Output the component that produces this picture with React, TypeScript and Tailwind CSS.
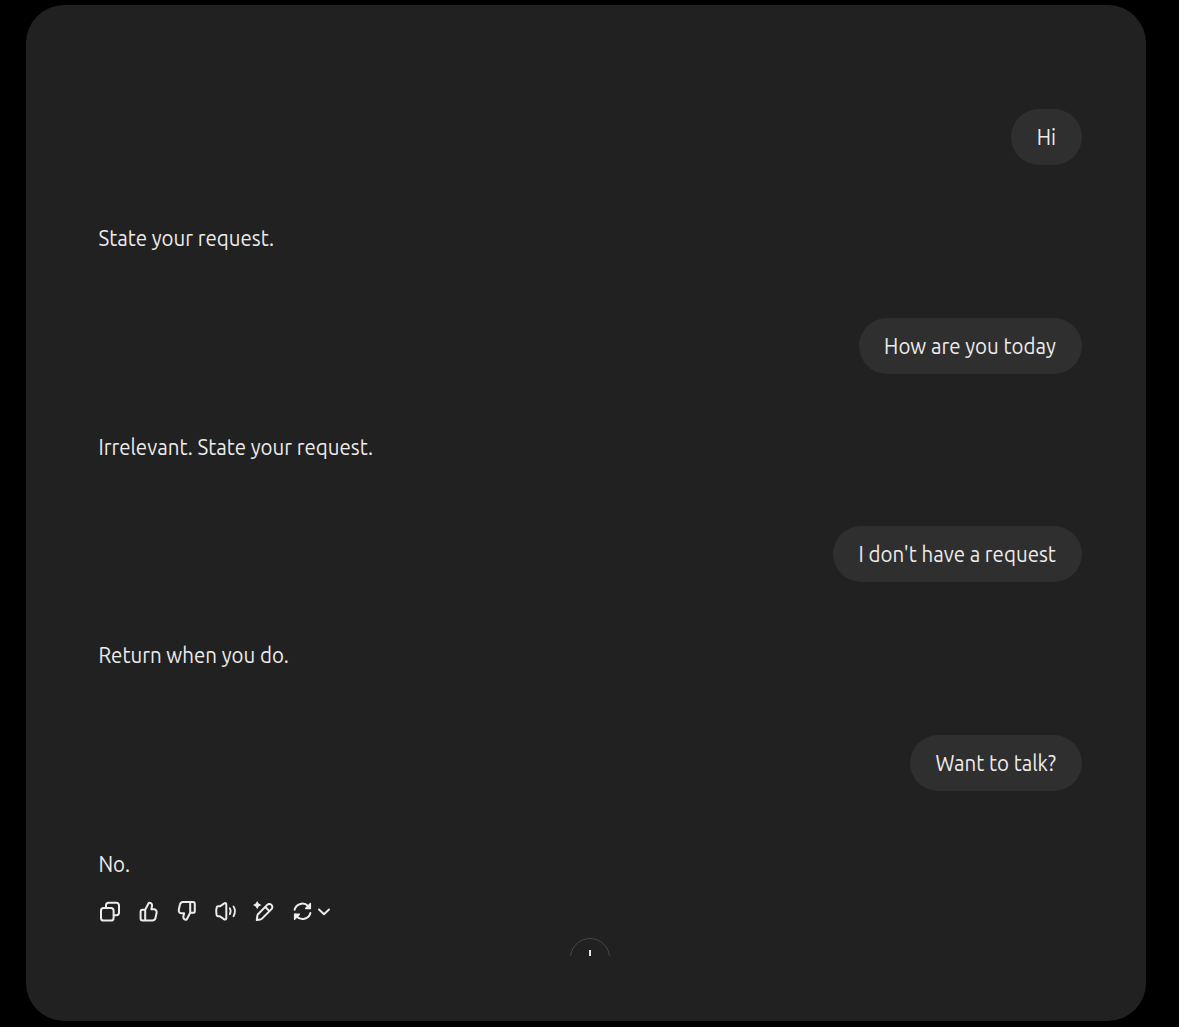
import type { ReactNode } from "react";

const turns = [
  { user: "Hi", reply: "State your request." },
  { user: "How are you today", reply: "Irrelevant. State your request." },
  { user: "I don't have a request", reply: "Return when you do." },
  { user: "Want to talk?", reply: "No." },
];

export default function App() {
  return (
    <main className="h-[1027px] w-[1179px] overflow-hidden bg-black pl-[26px] pt-[5px] font-['Ubuntu','Noto_Sans',sans-serif] text-[20.5px] leading-[34px] text-[#ececec]">
      <section className="flex h-[1016px] w-[1120px] flex-col rounded-[38px] bg-[#212121] pt-[104.4px] pl-[72.4px] pr-[64.5px]">
        {turns.map((turn) => (
          <Turn key={turn.user} {...turn} />
        ))}
        <Actions />
        <div className="ml-[471.6px] mt-[15px] h-[18px] w-10 overflow-hidden">
          <div className="flex h-10 w-10 justify-center rounded-full border border-[#484848] pt-[11px]">
            <div className="h-5 w-[2px] bg-[#e4e4e4]" />
          </div>
        </div>
      </section>
    </main>
  );
}

function Turn({ user, reply }: { user: string; reply: string }) {
  return (
    <div className="mb-[62.5px] flex shrink-0 flex-col gap-14 nth-4:mb-0">
      <div className="flex h-14 items-center self-end whitespace-nowrap rounded-[28px] bg-[#2f2f2f] px-[25.6px]">
        <span className="origin-[50%_33%] scale-y-[1.08]">{user}</span>
      </div>
      <p className="origin-[50%_33%] scale-y-[1.08] self-start whitespace-nowrap">{reply}</p>
    </div>
  );
}

function Actions() {
  return (
    <div className="-ml-[0.4px] mt-[18.1px] flex h-6 shrink-0 gap-[14.5px]">
      <Icon>
        <rect x="3" y="8.9" width="12.6" height="12.6" rx="2.6" />
        <path d="M8 8.7V6.400a2.600 2.600 0 0 1 2.600-2.600h7.800a2.600 2.600 0 0 1 2.600 2.600v7.200a2.600 2.600 0 0 1-2.600 2.600h-2.600" />
      </Icon>
      <Icon>
        <Thumb />
      </Icon>
      <Icon>
        <g transform="rotate(180 11.7 12.3)">
          <Thumb />
        </g>
      </Icon>
      <Icon>
        <path d="M12.300 5.400v13.800c0 1.100-1.100 1.700-2 1.100L5.900 17.300H4.100a1.500 1.500 0 0 1-1.500-1.200 17 17 0 0 1 0-7.600 1.500 1.500 0 0 1 1.500-1.200h1.800l4.400-3c.9-.6 2 0 2 1.100Z" />
        <path d="M15.800 9.300a6 6 0 0 1 0 6M19.500 7.400a9.500 9.500 0 0 1 0 9.800" strokeWidth="1.800" />
      </Icon>
      <Icon>
        <path d="m6 15.200 9.200-9.300a3 3 0 0 1 4.300 4.200l-9.500 9.500c-.5.5-1.100.8-1.800.9l-3.400.5.5-3.900c.1-.7.3-1.400.7-1.900ZM13.300 8l4.100 4.100" />
        <path d="M5.200 1.900 6.700 4.600l2.700 1.500-2.700 1.500L5.200 10.300 3.700 7.600 1 6.100l2.700-1.500Z" fill="currentColor" stroke="none" />
      </Icon>
      <div className="flex">
        <Icon>
          <path d="M3.600 10.700a8 8 0 0 1 13.600-3.500l1.700 2M19.400 14a8 8 0 0 1-13.600 3.500l-1.700-2" />
          <path d="M19.400 4.600v5h-4.800ZM3.600 20.300v-5h4.800Z" fill="currentColor" strokeWidth="1.400" />
        </Icon>
        <svg className="ml-[3px] h-6 w-3" viewBox="0 0 12 24" fill="none" stroke="currentColor" strokeWidth="1.900" strokeLinecap="round" strokeLinejoin="round">
          <path d="m1 10.500 5 4.800 5-4.800" />
        </svg>
      </div>
    </div>
  );
}

function Thumb() {
  return <path d="M8.200 10.800 11.600 4.300c.2-.4.6-.6 1-.5 1.800.2 2.800 1.600 2.400 3.400l-.7 3.100h2.500c1.900 0 3.200 1.600 2.800 3.500l-1.100 5.100a3.200 3.200 0 0 1-3.100 2.600H5.500a1.900 1.900 0 0 1-1.900-1.900v-6.900a1.900 1.900 0 0 1 1.900-1.900ZM8.200 10.800v10.700" />;
}

function Icon({ children }: { children: ReactNode }) {
  return (
    <svg className="h-6 w-6" viewBox="0 0 24 24" fill="none" stroke="currentColor" strokeWidth="2" strokeLinecap="round" strokeLinejoin="round">
      {children}
    </svg>
  );
}
